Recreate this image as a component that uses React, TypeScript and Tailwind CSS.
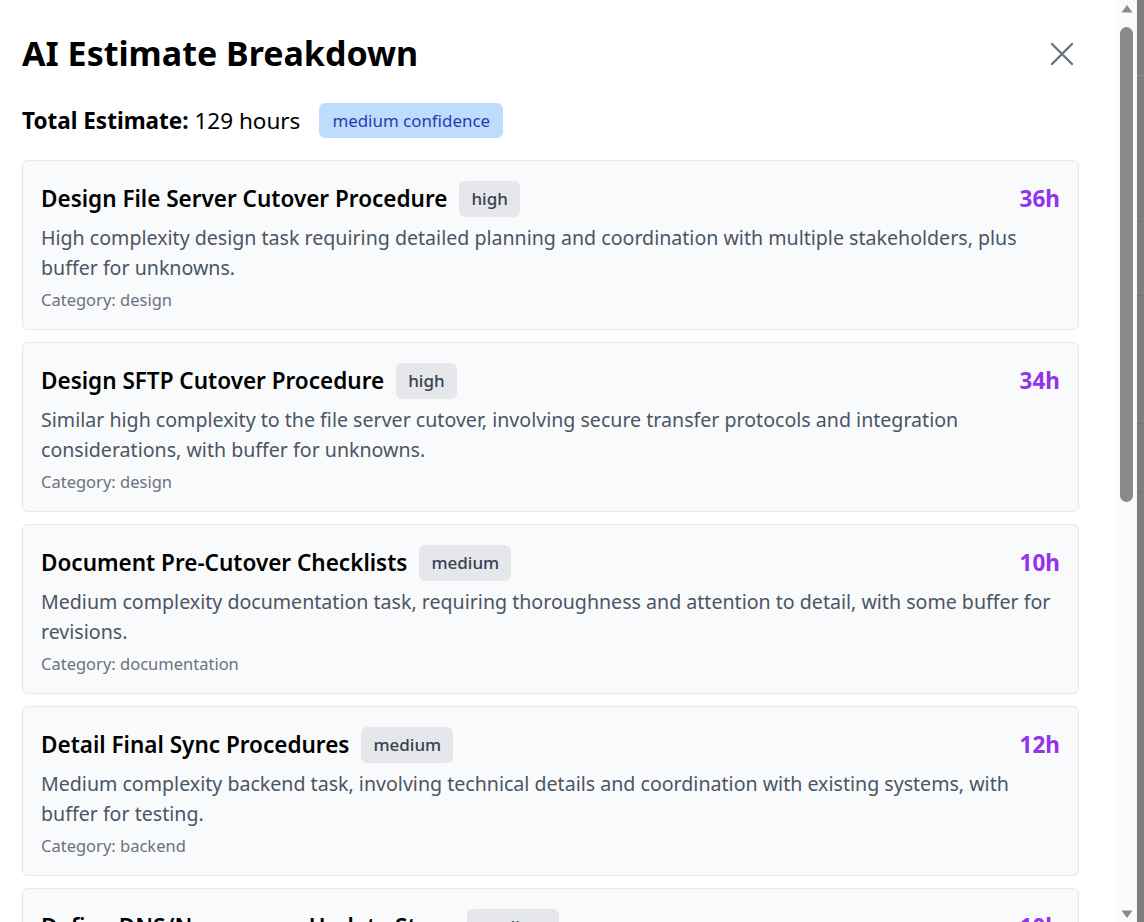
import React from "react";

type Task = {
  title: string;
  complexity: string;
  hours: number;
  reason: string;
  category: string;
};

const tasks: Task[] = [
  {
    title: "Design File Server Cutover Procedure",
    complexity: "high",
    hours: 36,
    reason:
      "High complexity design task requiring detailed planning and coordination with multiple stakeholders, plus buffer for unknowns.",
    category: "design",
  },
  {
    title: "Design SFTP Cutover Procedure",
    complexity: "high",
    hours: 34,
    reason:
      "Similar high complexity to the file server cutover, involving secure transfer protocols and integration considerations, with buffer for unknowns.",
    category: "design",
  },
  {
    title: "Document Pre-Cutover Checklists",
    complexity: "medium",
    hours: 10,
    reason:
      "Medium complexity documentation task, requiring thoroughness and attention to detail, with some buffer for revisions.",
    category: "documentation",
  },
  {
    title: "Detail Final Sync Procedures",
    complexity: "medium",
    hours: 12,
    reason:
      "Medium complexity backend task, involving technical details and coordination with existing systems, with buffer for testing.",
    category: "backend",
  },
  {
    title: "Define DNS/Namespace Update Steps",
    complexity: "medium",
    hours: 10,
    reason:
      "Medium complexity task covering DNS records and namespace changes, with buffer for propagation checks.",
    category: "infrastructure",
  },
];

function TaskCard({ task }: { task: Task }) {
  return (
    <div className="shrink-0 rounded-md border border-[#e5e7eb] bg-[#f9fafb] px-[18px] pt-[20px] pb-[17px]">
      <div className="flex items-center justify-between">
        <div className="flex items-center gap-3">
          <h3 className="text-[22.5px] font-semibold leading-[36px] text-black">
            {task.title}
          </h3>
          <span className="rounded-md bg-[#e5e7eb] px-3 text-[17px] font-medium leading-[36px] text-[#374151]">
            {task.complexity}
          </span>
        </div>
        <span className="text-[22.5px] font-bold leading-[36px] text-[#9333ea]">
          {task.hours}h
        </span>
      </div>
      <p className="mt-[6px] text-[19.6px] leading-[30px] text-[#4b5563]">{task.reason}</p>
      <p className="mt-1 text-[16.5px] leading-[25px] text-[#6b7280]">
        Category: {task.category}
      </p>
    </div>
  );
}

function FakeScrollbar() {
  return (
    <div className="flex w-[21px] shrink-0 flex-col items-center bg-[#fafafa]">
      <svg width="14" height="14" viewBox="0 0 14 14" className="mt-[2px]">
        <path d="M7 3 L12.5 10.5 H1.5 Z" fill="#8a8a8a" />
      </svg>
      <div className="mt-[11px] h-[475px] w-[13px] rounded-full bg-[#8a8a8a]" />
      <div className="flex-1" />
      <svg width="14" height="14" viewBox="0 0 14 14" className="mb-[1px]">
        <path d="M7 11 L12.5 3.5 H1.5 Z" fill="#8a8a8a" />
      </svg>
    </div>
  );
}

export default function App() {
  return (
    <div
      className="flex h-[922px] w-full overflow-hidden bg-[#7e7e80]"
      style={{ fontFamily: '"Noto Sans", "Open Sans", sans-serif' }}
    >
      <div className="flex w-[1137px] shrink-0 bg-white">
        <div className="flex min-w-0 flex-1 flex-col overflow-hidden pl-[22px] pr-[37px]">
          <div className="flex items-center justify-between pt-[31px]">
            <h2 className="text-[34px] font-bold leading-[45px] text-black">
              AI Estimate Breakdown
            </h2>
            <button type="button" aria-label="Close" className="mr-[5px] text-[#6b7280]">
              <svg width="24" height="24" viewBox="0 0 24 24" fill="none">
                <path
                  d="M2 2 L22 22 M22 2 L2 22"
                  stroke="currentColor"
                  strokeWidth="2.4"
                  strokeLinecap="round"
                />
              </svg>
            </button>
          </div>
          <div className="mt-[27px] flex items-center gap-[19px]">
            <p className="text-[22.5px] leading-[30px] text-black">
              <span className="font-bold">Total Estimate:</span> 129 hours
            </p>
            <span className="rounded-md bg-[#bfdbfe] px-[13px] text-[16.9px] leading-[35px] text-[#1e40af]">
              medium confidence
            </span>
          </div>
          <div className="mt-[22px] flex flex-col gap-[12px]">
            {tasks.map((t) => (
              <TaskCard key={t.title} task={t} />
            ))}
          </div>
        </div>
        <FakeScrollbar />
      </div>
      <div className="flex flex-1 flex-col">
        <div className="mt-[75px] h-px bg-[#8c8c8e]" />
        <div className="mt-[145px] h-px bg-[#747476]" />
        <div className="mt-[73px] h-px bg-[#747476]" />
        <div className="mt-[127px] h-px bg-[#747476]" />
        <div className="mt-[67px] h-px bg-[#747476]" />
      </div>
    </div>
  );
}
